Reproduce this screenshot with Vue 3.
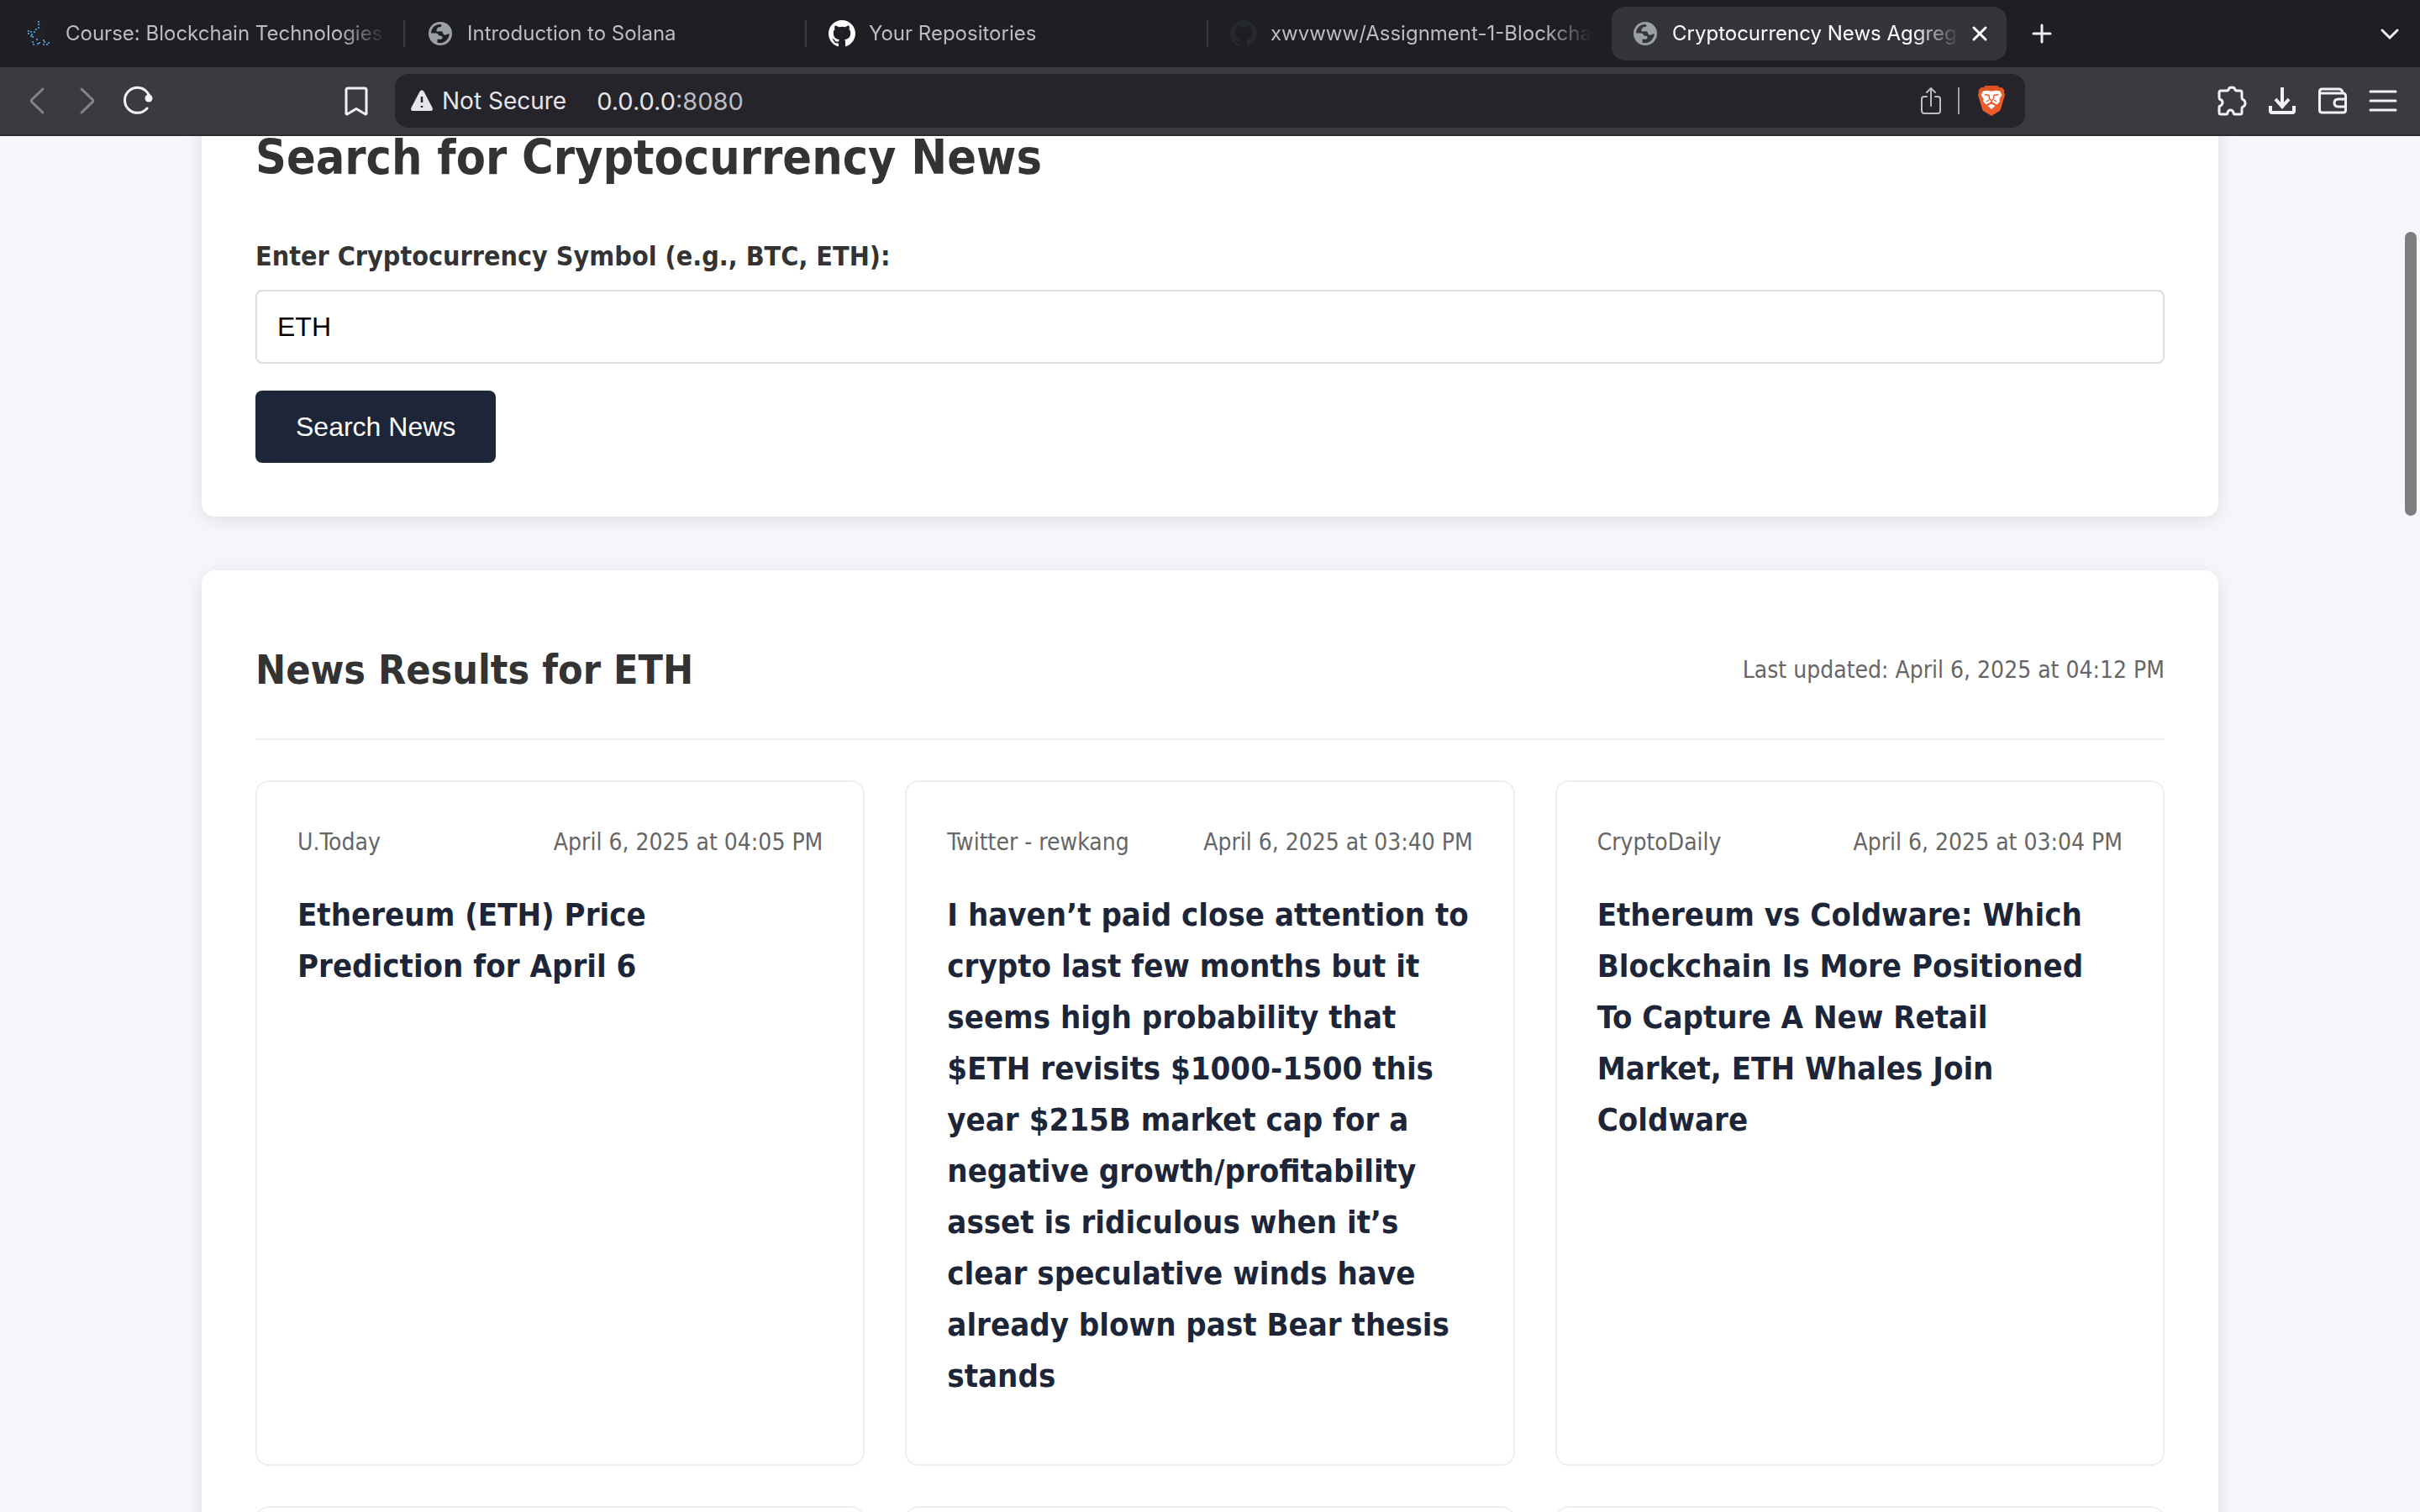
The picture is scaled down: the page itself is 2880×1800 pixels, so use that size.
<script setup>
import { ref } from 'vue'

const tabs = [
  { icon: 'course', title: 'Course: Blockchain Technologies' },
  { icon: 'globe', title: 'Introduction to Solana' },
  { icon: 'github', title: 'Your Repositories' },
  { icon: 'github-dim', title: 'xwvwww/Assignment-1-Blockcha' },
  { icon: 'globe', title: 'Cryptocurrency News Aggreg', active: true },
]

const symbol = ref('ETH')

const articles = [
  { source: 'U.Today', date: 'April 6, 2025 at 04:05 PM', title: 'Ethereum (ETH) Price\nPrediction for April 6' },
  {
    source: 'Twitter - rewkang',
    date: 'April 6, 2025 at 03:40 PM',
    title:
      'I haven’t paid close attention to crypto last few months but it seems high probability that $ETH revisits $1000-1500 this year $215B market cap for a negative growth/profitability asset is ridiculous when it’s clear speculative winds have already blown past Bear thesis stands',
  },
  {
    source: 'CryptoDaily',
    date: 'April 6, 2025 at 03:04 PM',
    title: 'Ethereum vs Coldware: Which Blockchain Is More Positioned To Capture A New Retail\nMarket, ETH Whales Join\nColdware',
  },
]

const dots = [
  [15, 1], [15, 4], [15, 8], [12, 10], [3, 12], [3, 15], [6, 13], [10, 13], [7, 16], [6, 18], [8, 19],
  [13, 22], [8, 25], [9, 28], [14, 27], [16, 26], [21, 23], [22, 25], [21, 28], [25, 28], [27, 26],
]
</script>

<template>
  <div class="browser">
    <header>
      <nav class="tabs" aria-label="Tabs">
        <div v-for="tab in tabs" :key="tab.title" class="tab" :class="{ active: tab.active }">
          <svg v-if="tab.icon === 'course'" class="favicon" viewBox="0 0 32 32">
            <g fill="none" stroke="#2a2a2d" stroke-width="1">
              <circle cx="17" cy="16" r="3" />
              <circle cx="17" cy="16" r="6" />
              <path d="M17 31A15 15 0 0 1 17 1M17 4a12 12 0 0 1 8 3M17 1a15 15 0 0 1 10 4M17 7a9 9 0 0 1 6 2" />
            </g>
            <rect v-for="(d, i) in dots" :key="i" :x="d[0]" :y="d[1]" width="2" height="2" fill="#3f93c4" />
          </svg>
          <svg v-else-if="tab.icon === 'globe'" class="favicon" viewBox="-2 -2 32 32">
            <circle cx="14" cy="14" r="14" fill="#9aa0a6" />
            <path
              class="land"
              d="M14.7 3C16 4.500 15.500 5.800 14 6C12 6.200 10.500 6.500 10.500 8C9.500 9 9 10.500 9.800 11.500L15.500 11.300C17 11.500 16.500 13 17.500 14.500C19 16.500 21 15.500 22 15C23 14 24 14 24.800 14.300C24.500 17.500 23.500 19.500 22 21.300C20 23.500 18 24.500 16 25C14 25.300 12 25.200 10.500 24.800V20.700H14.500C16 20.700 16.500 20 16.500 18.500C16.500 17.200 16 16.700 14 16.700C11.500 16.700 12 14 9.500 13.500H3C3 7.500 8 2.500 14.700 3Z"
            />
          </svg>
          <svg v-else class="favicon" :class="tab.icon" viewBox="0 0 16 16">
            <path
              d="M8 0C3.58 0 0 3.58 0 8c0 3.54 2.29 6.53 5.47 7.59.4.07.55-.17.55-.38 0-.19-.01-.82-.01-1.49-2.01.37-2.53-.49-2.69-.94-.09-.23-.48-.94-.82-1.13-.28-.15-.68-.52-.01-.53.63-.01 1.08.58 1.23.82.72 1.21 1.87.87 2.33.66.07-.52.28-.87.51-1.07-1.78-.2-3.64-.89-3.64-3.95 0-.87.31-1.59.82-2.15-.08-.2-.36-1.02.08-2.12 0 0 .67-.21 2.2.82.64-.18 1.32-.27 2-.27s1.36.09 2 .27c1.53-1.04 2.2-.82 2.2-.82.44 1.1.16 1.92.08 2.12.51.56.82 1.27.82 2.15 0 3.07-1.87 3.75-3.65 3.95.29.25.54.73.54 1.48 0 1.07-.01 1.93-.01 2.2 0 .21.15.46.55.38A8.01 8.01 0 0 0 16 8c0-4.42-3.58-8-8-8z"
            />
          </svg>
          <span class="tab-title">{{ tab.title }}</span>
          <button v-if="tab.active" type="button" class="close" aria-label="Close tab">
            <svg width="32" height="32" viewBox="0 0 32 32"><path d="M9 9L23 23M23 9L9 23" stroke="#fff" stroke-width="3" stroke-linecap="round" /></svg>
          </button>
        </div>
        <button type="button" class="icon-btn" aria-label="New tab">
          <svg width="32" height="32" viewBox="0 0 32 32"><path d="M16 6V26M6 16H26" stroke="#f0f0f2" stroke-width="3" stroke-linecap="round" /></svg>
        </button>
        <button type="button" class="icon-btn tab-search" aria-label="Search tabs">
          <svg width="32" height="32" viewBox="0 0 32 32" fill="none"><path d="M7 12L16 21L25 12" stroke="#f0f0f2" stroke-width="3" stroke-linecap="round" /></svg>
        </button>
      </nav>

      <div class="toolbar">
        <div class="tools left">
          <button type="button" class="icon-btn" aria-label="Back">
            <svg width="36" height="36" viewBox="0 0 36 36"><path d="M25 4L12 16.500Q10.500 18 12 19.500L25 32" stroke="#858488" /></svg>
          </button>
          <button type="button" class="icon-btn" aria-label="Forward">
            <svg width="36" height="36" viewBox="0 0 36 36"><path d="M11 4L24 16.500Q25.500 18 24 19.500L11 32" stroke="#858488" /></svg>
          </button>
          <button type="button" class="icon-btn" aria-label="Reload">
            <svg width="36" height="36" viewBox="0 0 36 36">
              <path d="M29 27A15 15 0 1 1 30 9L33 14" />
              <circle cx="31" cy="15" r="4.500" class="solid" />
            </svg>
          </button>
          <button type="button" class="icon-btn bookmark" aria-label="Bookmark">
            <svg width="36" height="36" viewBox="0 0 36 36"><path d="M8 3H28Q30 3 30 5V33.500L29 34L18 27.500L7 34L6 33.500V5Q6 3 8 3Z" /></svg>
          </button>
        </div>

        <div class="address">
          <svg width="28" height="28" viewBox="0 0 28 28">
            <path d="M11.500 3Q14 -.5 16.500 3L26.500 22Q28 26 24 26H4Q0 26 1.500 22Z" fill="#e6e5ea" />
            <path d="M14 9V16M14 20V22" stroke="#25242a" stroke-width="2.500" />
          </svg>
          <span class="secure">Not Secure</span>
          <span class="url">0.0.0.0<span class="port">:8080</span></span>
          <button type="button" class="share" aria-label="Share">
            <svg width="36" height="36" viewBox="0 0 36 36" class="share-icon"><path d="M13 13H10Q7 13 7 16V30Q7 33 10 33H26Q29 33 29 30V16Q29 13 26 13H23M18 24V3M13 8L18 3L23 8" /></svg>
          </button>
          <i class="divider"></i>
          <button type="button" class="shield" aria-label="Brave Shields">
            <svg width="32" height="36" viewBox="0 0 32 36">
              <path d="M8.700 0H23L25.500 2.400L28 2L31.500 5.500L30.800 7.500L32 11L27 28Q26.500 29.500 25 30.500L16 36L7 30.500Q5.500 29.500 5 28L0 11L1.200 7.500L.5 5.500L4 2L6.500 2.400Z" fill="#ec5b29" />
              <path d="M8.700 0H23L25.500 2.400L28 2L31.500 5.500H.5L4 2L6.500 2.400Z" fill="#dc5324" />
              <path d="M6 6.500L11 5.800L16 6.800L21 5.800L26 6.500L28.500 11L25.500 15.500L25.800 19L22.500 22.500L18.500 20.500L16 18.500L13.500 20.500L9.500 22.500L6.200 19L6.500 15.500L3.500 11Z" fill="#fff" />
              <path d="M11.500 24L16 21.800L20.500 24L16 28Z" fill="#fff" />
              <path d="M7.500 10.500L13 11.500L13.500 15.500L16 18L18.500 15.500L19 11.500L24.500 10.500M10 19L13 17M22 19L19 17M16 18V21" fill="none" stroke="#ec5b29" stroke-width="1.500" />
            </svg>
          </button>
        </div>

        <div class="tools right">
          <button type="button" class="icon-btn" aria-label="Extensions">
            <svg width="36" height="36" viewBox="0 0 36 36"><path d="M3 8Q3 6 5 6H12Q14 6 14 4.500Q15 2 18 2T22 4.500Q22 6 24 6H28Q30 6 30 8V14Q30 16 31.500 16.500Q34 18 34 21T31.500 25Q30 25.500 30 27V32Q30 34 28 34H22Q20 34 20 32Q19 29 16.500 29T13 32Q13 34 11 34H5Q3 34 3 32V26Q3 24 4.500 24Q7 22.500 7 20T4.500 16.500Q3 16 3 14Z" /></svg>
          </button>
          <button type="button" class="icon-btn" aria-label="Downloads">
            <svg width="36" height="36" viewBox="0 0 36 36" class="bold"><path d="M18 2V24M10 16L18 25L26 16M4 24V30Q4 32 6 32H30Q32 32 32 30V24" /></svg>
          </button>
          <button type="button" class="icon-btn" aria-label="Wallet">
            <svg width="36" height="36" viewBox="0 0 36 36"><path d="M30 8.500Q33.500 9.500 33.500 12V29Q33.500 32 30.500 32H5.500Q2.500 32 2.500 29V7Q2.500 4 5.500 4H25Q29.500 4 30 8.500ZM30 9H4M33 16H25Q20 16 20 20.500T25 25H33" /></svg>
          </button>
          <button type="button" class="icon-btn" aria-label="Menu">
            <svg width="36" height="36" viewBox="0 0 36 36"><path d="M3 7H33M3 18H33M3 29H33" /></svg>
          </button>
        </div>
      </div>
    </header>

    <main class="viewport">
      <div class="container">
        <section class="panel search">
          <h1>Search for Cryptocurrency News</h1>
          <form @submit.prevent>
            <label for="symbol">Enter Cryptocurrency Symbol (e.g., BTC, ETH):</label>
            <input id="symbol" v-model="symbol" type="text" />
            <button type="submit" class="submit">Search News</button>
          </form>
        </section>

        <section class="panel">
          <div class="results-head">
            <h2>News Results for ETH</h2>
            <span>Last updated: April 6, 2025 at 04:12 PM</span>
          </div>
          <div class="grid">
            <article v-for="a in articles" :key="a.title" class="card">
              <div class="meta"><span>{{ a.source }}</span><time>{{ a.date }}</time></div>
              <h3><a href="#">{{ a.title }}</a></h3>
            </article>
            <article v-for="n in 3" :key="n" class="card"></article>
          </div>
        </section>
      </div>
      <div class="scroll-thumb"></div>
    </main>
  </div>
</template>

<style>
body {
  background: #f5f7fb;
}
</style>

<style scoped>
.browser {
  display: flex;
  flex-direction: column;
  height: 100vh;
  overflow: hidden;
  font-family: "DejaVu Sans Condensed", "DejaVu Sans", sans-serif;
  color: #333;
}
.browser * {
  box-sizing: border-box;
}
header {
  flex: none;
  font-family: Inter, "Liberation Sans", sans-serif;
  border-bottom: 2px solid #2d2c31;
}
button {
  border: 0;
  padding: 0;
  background: none;
  cursor: pointer;
}
svg {
  display: block;
  flex: none;
}
.tabs {
  display: flex;
  align-items: center;
  height: 80px;
  padding: 0 6px 0 4px;
  background: #1f1e23;
}
.tab {
  display: flex;
  align-items: center;
  gap: 16px;
  flex: 0 1 478px;
  min-width: 0;
  height: 32px;
  padding: 0 20px 0 26px;
  border-right: 2px solid #3b3a3f;
  font-size: 24px;
  color: #bdbcbf;
}
.tab:nth-child(4) {
  border-color: transparent;
}
.tab.active {
  flex-basis: 470px;
  height: 64px;
  margin-left: 2px;
  padding: 0 16px 0 24px;
  border: 0;
  border-radius: 16px;
  background: #35343a;
  color: #fff;
}
.active .tab-title {
  margin-right: -8px;
}
.favicon {
  width: 32px;
  height: 32px;
}
.land {
  fill: #1f1e23;
}
.active .land {
  fill: #35343a;
}
.github {
  fill: #fff;
}
.github-dim {
  fill: #24292e;
}
.tab-title {
  flex: 1;
  min-width: 0;
  overflow: hidden;
  white-space: nowrap;
  line-height: 32px;
  mask-image: linear-gradient(to right, #000 calc(100% - 56px), transparent);
}
.icon-btn {
  display: flex;
  align-items: center;
  justify-content: center;
  flex: none;
  width: 60px;
  height: 60px;
}
.tabs .icon-btn {
  margin-left: 12px;
}
.tabs .tab-search {
  margin-left: auto;
}
.toolbar {
  display: flex;
  align-items: center;
  height: 80px;
  background: #3b3a3e;
}
.tools {
  display: flex;
  flex: none;
  width: 470px;
}
.left {
  padding: 0 16px 0 14px;
}
.right {
  justify-content: flex-end;
  padding-right: 14px;
}
.bookmark {
  margin-left: auto;
}
.tools svg,
.share-icon {
  fill: none;
  stroke: #f2f1f5;
  stroke-width: 3;
  stroke-linecap: round;
  stroke-linejoin: round;
}
.tools .bold {
  stroke-width: 4;
  stroke-linecap: butt;
  stroke-linejoin: miter;
}
.tools .solid {
  fill: #f2f1f5;
  stroke: none;
}
.address {
  display: flex;
  align-items: center;
  flex: 1;
  min-width: 0;
  height: 64px;
  padding: 0 24px 0 18px;
  border-radius: 16px;
  background: #25242a;
  color: #e6e5ea;
  font-size: 28px;
}
.secure {
  margin: 0 36px 0 10px;
}
.url {
  font-size: 29px;
}
.port {
  color: #bdbcc2;
}
.share {
  margin-left: auto;
}
.share-icon {
  stroke: #bdbcc2;
  stroke-width: 2;
}
.divider {
  width: 2px;
  height: 32px;
  margin: 0 22px 0 14px;
  background: #a3a2a8;
}
.viewport {
  position: relative;
  flex: 1;
  min-height: 0;
  overflow: hidden;
  background: #f5f7fb;
}
.container {
  max-width: 2400px;
  margin: 0 auto;
}
.panel {
  padding: 64px;
  margin-bottom: 64px;
  border-radius: 16px;
  background: #fff;
  box-shadow: 0 4px 24px rgba(0, 0, 0, 0.1);
}
/* The page is scrolled down so the top of the search panel is out of view. */
.search {
  margin-top: -85px;
}
h1,
h2,
h3 {
  margin: 0;
}
h1 {
  margin-bottom: 48px;
  font-size: 57px;
  line-height: 92px;
}
label {
  display: block;
  margin-bottom: 16px;
  font-size: 32px;
  line-height: 48px;
  font-weight: bold;
}
input {
  display: block;
  width: 100%;
  height: 88px;
  margin-bottom: 32px;
  padding: 0 24px;
  border: 2px solid #ddd;
  border-radius: 8px;
  background: #fff;
  color: #000;
  font: 32px "Liberation Sans", sans-serif;
}
.submit {
  display: block;
  height: 86px;
  padding: 0 48px;
  border-radius: 8px;
  background: #1d2538;
  color: #fff;
  font: 32px "Liberation Sans", sans-serif;
}
.results-head {
  display: flex;
  align-items: center;
  justify-content: space-between;
  padding: 16px 0 44px;
  margin-bottom: 48px;
  border-bottom: 2px solid #eee;
  font-size: 28px;
  color: #666;
}
h2 {
  font-size: 48px;
  line-height: 76px;
  color: #333;
}
.grid {
  display: grid;
  grid-template-columns: repeat(3, 1fr);
  gap: 48px;
}
.card {
  min-height: 400px;
  padding: 48px 48px 74px;
  border: 2px solid #eee;
  border-radius: 16px;
}
.meta {
  display: flex;
  justify-content: space-between;
  margin-bottom: 32px;
  font-size: 28px;
  line-height: 48px;
  color: #666;
}
h3 {
  font-size: 38px;
  line-height: 61px;
  white-space: pre-line;
}
h3 a {
  color: #1d2538;
  text-decoration: none;
}
.scroll-thumb {
  position: absolute;
  top: 114px;
  right: 4px;
  width: 14px;
  height: 338px;
  border-radius: 7px;
  background: #7d7e7f;
}
</style>
